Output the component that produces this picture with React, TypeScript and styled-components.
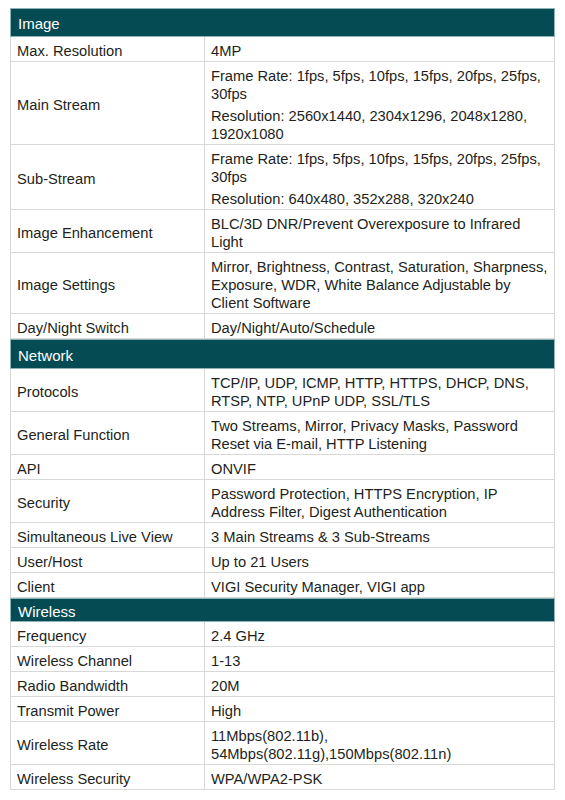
import React from "react";
import styled, { createGlobalStyle } from "styled-components";

const Global = createGlobalStyle`
  html, body { margin: 0; padding: 0; background: #ffffff; }
  body { font-family: "Liberation Sans", Arial, sans-serif; color: #231f20; }
`;

const Page = styled.div`
  padding: 8px 12px 10px 10px;
`;

const Sheet = styled.div`
  width: 543px;
  border-left: 1px solid #d8d8d8;
  border-right: 1px solid #d8d8d8;
`;

const SectionHead = styled.div<{ $h: number }>`
  height: ${(p) => p.$h}px;
  box-sizing: border-box;
  display: flex;
  align-items: center;
  padding: 2px 0 0 7px;
  background: #054b54;
  color: #ffffff;
  font-size: 15px;
  border: 1px solid #8fb3b7;
  margin: 0 -1px;
`;

const Row = styled.div`
  display: grid;
  grid-template-columns: 194px 1fr;
  border-bottom: 1px solid #d8d8d8;
  font-size: 14.7px;
  line-height: 18px;
`;

const Label = styled.div`
  display: flex;
  align-items: center;
  padding: 5px 6px 1px;
  border-right: 1px solid #d8d8d8;
`;

const Value = styled.div`
  display: flex;
  flex-direction: column;
  justify-content: center;
  gap: 4px;
  padding: 5px 3px 1px 6px;
`;

const Para = styled.div`
  white-space: pre-line;
`;

type Spec = { label: string; value: string[] };
type Section = { title: string; h: number; rows: Spec[] };

const data: Section[] = [
  {
    title: "Image",
    h: 29,
    rows: [
      { label: "Max. Resolution", value: ["4MP"] },
      {
        label: "Main Stream",
        value: [
          "Frame Rate: 1fps, 5fps, 10fps, 15fps, 20fps, 25fps, 30fps",
          "Resolution: 2560x1440, 2304x1296, 2048x1280, 1920x1080",
        ],
      },
      {
        label: "Sub-Stream",
        value: [
          "Frame Rate: 1fps, 5fps, 10fps, 15fps, 20fps, 25fps, 30fps",
          "Resolution: 640x480, 352x288, 320x240",
        ],
      },
      { label: "Image Enhancement", value: ["BLC/3D DNR/Prevent Overexposure to Infrared Light"] },
      {
        label: "Image Settings",
        value: [
          "Mirror, Brightness, Contrast, Saturation, Sharpness, Exposure, WDR, White Balance Adjustable by\nClient Software",
        ],
      },
      { label: "Day/Night Switch", value: ["Day/Night/Auto/Schedule"] },
    ],
  },
  {
    title: "Network",
    h: 30,
    rows: [
      { label: "Protocols", value: ["TCP/IP, UDP, ICMP, HTTP, HTTPS, DHCP, DNS, RTSP, NTP, UPnP UDP, SSL/TLS"] },
      {
        label: "General Function",
        value: ["Two Streams, Mirror, Privacy Masks, Password Reset via E-mail, HTTP Listening"],
      },
      { label: "API", value: ["ONVIF"] },
      {
        label: "Security",
        value: ["Password Protection, HTTPS Encryption, IP Address Filter, Digest Authentication"],
      },
      { label: "Simultaneous Live View", value: ["3 Main Streams & 3 Sub-Streams"] },
      { label: "User/Host", value: ["Up to 21 Users"] },
      { label: "Client", value: ["VIGI Security Manager, VIGI app"] },
    ],
  },
  {
    title: "Wireless",
    h: 24,
    rows: [
      { label: "Frequency", value: ["2.4 GHz"] },
      { label: "Wireless Channel", value: ["1-13"] },
      { label: "Radio Bandwidth", value: ["20M"] },
      { label: "Transmit Power", value: ["High"] },
      { label: "Wireless Rate", value: ["11Mbps(802.11b),\n54Mbps(802.11g),150Mbps(802.11n)"] },
      { label: "Wireless Security", value: ["WPA/WPA2-PSK"] },
    ],
  },
];

export default function App() {
  return (
    <Page>
      <Global />
      <Sheet>
        {data.map((s) => (
          <React.Fragment key={s.title}>
            <SectionHead $h={s.h}>{s.title}</SectionHead>
            {s.rows.map((r) => (
              <Row key={r.label}>
                <Label>{r.label}</Label>
                <Value>
                  {r.value.map((v) => (
                    <Para key={v}>{v}</Para>
                  ))}
                </Value>
              </Row>
            ))}
          </React.Fragment>
        ))}
      </Sheet>
    </Page>
  );
}
